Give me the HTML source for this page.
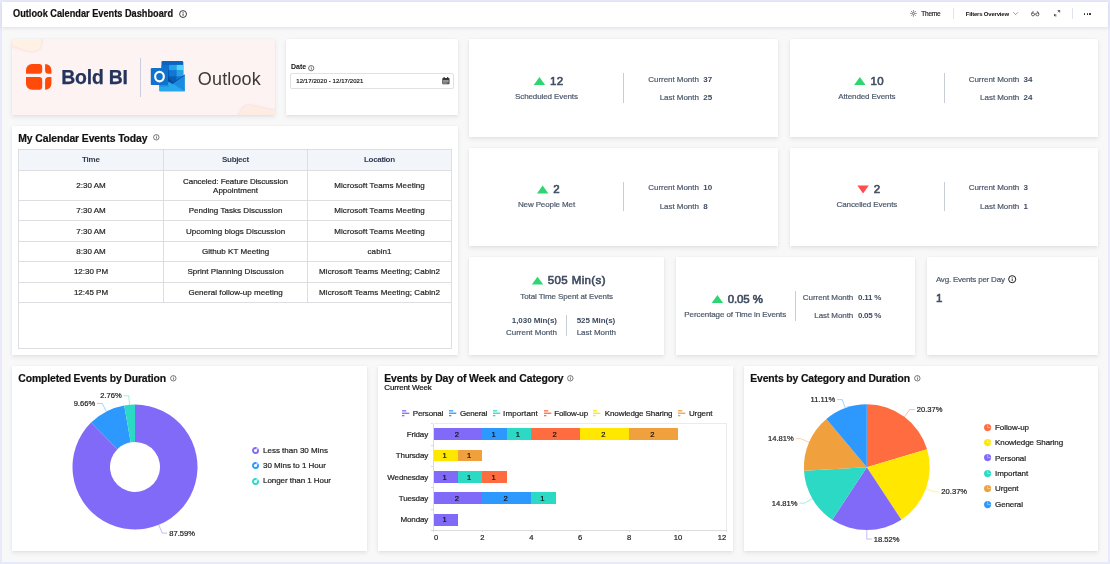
<!DOCTYPE html>
<html><head><meta charset="utf-8"><title>Outlook Calendar Events Dashboard</title>
<style>
html,body{margin:0;padding:0}
body{width:1110px;height:564px;overflow:hidden;background:#e8eafb;font-family:"Liberation Sans",sans-serif;position:relative}
#page{position:absolute;left:2px;top:2px;width:1106px;height:560px;background:#f8f8f9}
.t{position:absolute;white-space:nowrap;line-height:1}
.b{position:absolute}
.card{position:absolute;background:#fff;box-shadow:0 2px 4px rgba(40,50,70,0.10),0 0 2px rgba(40,50,70,0.05)}
svg{position:absolute;overflow:visible}
</style></head><body>
<div id="page"></div>
<div id="root" style="position:absolute;left:0;top:0;width:1110px;height:564px;will-change:transform">
<div class="b" style="left:2px;top:2px;width:1106px;height:25px;background:#fff;box-shadow:0 1px 4px rgba(40,50,70,0.13)"></div>
<div class="t" style="left:12.60px;top:9.00px;font-size:10px;color:#111;font-weight:700;-webkit-text-stroke:0.2px;transform:scaleX(0.9199);transform-origin:left center;">Outlook Calendar Events Dashboard</div>
<svg style="left:179.1px;top:9.5px" width="8.1" height="8.1" viewBox="0 0 8 8"><circle cx="4" cy="4" r="3.4" fill="none" stroke="#1a1a1a" stroke-width="0.85"/><rect x="3.6" y="3.4" width="0.8" height="2.4" fill="#1a1a1a"/><rect x="3.6" y="1.9" width="0.8" height="0.9" fill="#1a1a1a"/></svg>
<div class="card" style="left:12px;top:39px;width:263px;height:76px;background:#fdf3f2;overflow:hidden"></div>
<div class="card" style="left:286px;top:39px;width:172px;height:76px;"></div>
<div class="card" style="left:12px;top:126px;width:446px;height:229px;"></div>
<div class="card" style="left:469px;top:39px;width:309px;height:98px;"></div>
<div class="card" style="left:790px;top:39px;width:308px;height:98px;"></div>
<div class="card" style="left:469px;top:148px;width:309px;height:98px;"></div>
<div class="card" style="left:790px;top:148px;width:308px;height:98px;"></div>
<div class="card" style="left:469px;top:257px;width:195px;height:98px;"></div>
<div class="card" style="left:676px;top:257px;width:239px;height:98px;"></div>
<div class="card" style="left:927px;top:257px;width:171px;height:98px;"></div>
<div class="card" style="left:12px;top:366px;width:355px;height:185px;"></div>
<div class="card" style="left:378px;top:366px;width:355px;height:185px;"></div>
<div class="card" style="left:744px;top:366px;width:354px;height:185px;"></div>
<svg style="left:12px;top:39px" width="263" height="76" viewBox="0 0 263 76"><defs><clipPath id="lc"><rect width="263" height="76"/></clipPath></defs><g clip-path="url(#lc)"><g style="filter:drop-shadow(0 0.5px 1.5px rgba(225,150,150,0.35))"><path d="M-4 -4 H29.2 V2 Q29.6 12 20 12.3 Q14 12.2 -4 5 Z" fill="#fff1e4"/><path d="M226.5 80 Q229 66 237 66 L268 73 V80 Z" fill="#feece2"/></g></g></svg>
<svg style="left:25.7px;top:64.2px" width="25.4" height="25.8" viewBox="0 0 25.4 25.8"><path d="M6 0 H13.2 A3 3 0 0 1 16.2 3 V6.800000000000001 A3 3 0 0 1 13.2 9.8 H0.01 A0.01 0.01 0 0 1 0 9.790000000000001 V6 A6 6 0 0 1 6 0 Z" fill="#ff4a0a"/><path d="M0.01 12.9 H13.2 A3 3 0 0 1 16.2 15.9 V22.8 A3 3 0 0 1 13.2 25.8 H6 A6 6 0 0 1 0 19.8 V12.91 A0.01 0.01 0 0 1 0.01 12.9 Z" fill="#ff4a0a"/><path d="M19.700000000000003 0 H19.4 A6 6 0 0 1 25.4 6 V9.790000000000001 A0.01 0.01 0 0 1 25.389999999999997 9.8 H22.700000000000003 A3.6 3.6 0 0 1 19.1 6.200000000000001 V0.6 A0.6 0.6 0 0 1 19.700000000000003 0 Z" fill="#ff4a0a"/><path d="M22.700000000000003 12.9 H25.389999999999997 A0.01 0.01 0 0 1 25.4 12.91 V19.8 A6 6 0 0 1 19.4 25.8 H19.700000000000003 A0.6 0.6 0 0 1 19.1 25.2 V16.5 A3.6 3.6 0 0 1 22.700000000000003 12.9 Z" fill="#ff4a0a"/></svg>
<div class="t" style="left:61.20px;top:68.00px;font-size:19.4px;color:#25345c;font-weight:700;letter-spacing:-0.182px;-webkit-text-stroke:0.25px #25345c;">Bold BI</div>
<div class="b" style="left:140.00px;top:58.00px;width:1.00px;height:38.50px;background:#c9cde0;"></div>
<svg style="left:150px;top:61px" width="35.4" height="30.5" viewBox="0 0 35.4 30.5">
<rect x="11.5" y="0" width="21.8" height="23" rx="1.3" fill="#0a64c0"/>
<rect x="11.5" y="3.9" width="7.5" height="5.6" fill="#1070cc"/>
<rect x="19" y="3.9" width="7.5" height="5.6" fill="#28a0e8"/>
<rect x="26.5" y="3.9" width="6.8" height="5.6" fill="#4fd4fc"/>
<rect x="11.5" y="9.5" width="7.5" height="6.1" fill="#0a5cb8"/>
<rect x="19" y="9.5" width="7.5" height="6.1" fill="#0f78d4"/>
<rect x="26.5" y="9.5" width="6.8" height="6.1" fill="#28a0e8"/>
<rect x="11.5" y="15.6" width="7.5" height="6.5" fill="#084fa0"/>
<rect x="19" y="15.6" width="7.5" height="7" fill="#0a5cb4"/>
<rect x="26.5" y="15.6" width="6.8" height="6" fill="#0f78d4"/>
<path d="M9.1 15 L18.1 20.3 L34.9 30 V29.2 A1.3 1.3 0 0 1 33.6 30.5 H10.4 A1.3 1.3 0 0 1 9.1 29.2 Z" fill="#28a8ec"/>
<path d="M34.9 13.8 L22 22.7 L34.9 30.4 Z" fill="#1a8ce0"/>
<path d="M18.1 17.4 L24 21.5 L22.3 22.7 L18.1 20.3 Z" fill="#0a4596" opacity="0.75"/>
<path d="M34.9 13.8 L22.3 22.7" stroke="#0a3f94" stroke-width="0.9" opacity="0.85" fill="none"/>
<rect x="9.1" y="24.1" width="9.8" height="1.6" fill="#0a58b0" opacity="0.3"/>
<rect x="18.1" y="8" width="1.2" height="14" fill="#063c80" opacity="0.22"/>
<rect x="0.8" y="7.1" width="17.3" height="17" rx="1.2" fill="#0f72ce"/>
<ellipse cx="9.5" cy="15.6" rx="4.35" ry="4.75" fill="none" stroke="#fff" stroke-width="2.1"/>
</svg>
<div class="t" style="left:197.80px;top:70.00px;font-size:18px;color:#3a3a3a;letter-spacing:0.161px;-webkit-text-stroke:0;">Outlook</div>
<div class="t" style="left:291.00px;top:63.00px;font-size:7px;color:#111;font-weight:700;">Date</div>
<svg style="left:307.6px;top:65px" width="6.4" height="6.4" viewBox="0 0 8 8"><circle cx="4" cy="4" r="3.3" fill="none" stroke="#222" stroke-width="0.8"/><rect x="3.6" y="3.4" width="0.8" height="2.3" fill="#222"/><rect x="3.6" y="2.0" width="0.8" height="0.9" fill="#222"/></svg>
<div class="b" style="left:290.3px;top:73.4px;width:163.4px;height:15.3px;border:1px solid #e1e1e1;border-radius:2px;box-sizing:border-box;background:#fff"></div>
<div class="t" style="left:296.30px;top:78.00px;font-size:6px;color:#222;-webkit-text-stroke:0.2px;letter-spacing:0.073px;">12/17/2020 - 12/17/2021</div>
<svg style="left:442.2px;top:76.5px" width="7.8" height="7.6" viewBox="0 0 7.8 7.6">
<rect x="0.3" y="1" width="7.2" height="6.3" rx="0.8" fill="#333"/>
<rect x="1.6" y="0" width="1.1" height="2" fill="#333"/><rect x="5.1" y="0" width="1.1" height="2" fill="#333"/>
<rect x="1.0" y="2.9" width="5.8" height="3.9" fill="#fff" opacity="0.28"/><rect x="1.2" y="3" width="5.4" height="0.6" fill="#fff" opacity="0.5"/>
<rect x="1.5" y="4.3" width="1" height="0.8" fill="#fff" opacity="0.7"/><rect x="3.4" y="4.3" width="1" height="0.8" fill="#fff" opacity="0.7"/><rect x="5.3" y="4.3" width="1" height="0.8" fill="#fff" opacity="0.7"/>
<rect x="1.5" y="5.7" width="1" height="0.8" fill="#fff" opacity="0.7"/><rect x="3.4" y="5.7" width="1" height="0.8" fill="#fff" opacity="0.7"/>
</svg>
<div class="t" style="left:18.30px;top:134.00px;font-size:10.4px;color:#111;font-weight:700;-webkit-text-stroke:0.2px;letter-spacing:-0.095px;">My Calendar Events Today</div>
<svg style="left:153px;top:134.3px" width="6.6" height="6.6" viewBox="0 0 8 8"><circle cx="4" cy="4" r="3.3" fill="none" stroke="#333" stroke-width="0.8"/><rect x="3.6" y="3.4" width="0.8" height="2.3" fill="#333"/><rect x="3.6" y="2.0" width="0.8" height="0.9" fill="#333"/></svg>
<div class="b" style="left:18.40px;top:149.00px;width:433.20px;height:21.50px;background:#f2f5fa;"></div>
<div class="b" style="left:18.4px;top:149px;width:433.20000000000005px;height:200px;border:0.9px solid #dcdee2;box-sizing:border-box"></div>
<div class="b" style="left:18.40px;top:170.05px;width:433.20px;height:0.90px;background:#dcdee2;"></div>
<div class="b" style="left:18.40px;top:199.95px;width:433.20px;height:0.90px;background:#dcdee2;"></div>
<div class="b" style="left:18.40px;top:220.35px;width:433.20px;height:0.90px;background:#dcdee2;"></div>
<div class="b" style="left:18.40px;top:240.75px;width:433.20px;height:0.90px;background:#dcdee2;"></div>
<div class="b" style="left:18.40px;top:261.15px;width:433.20px;height:0.90px;background:#dcdee2;"></div>
<div class="b" style="left:18.40px;top:281.55px;width:433.20px;height:0.90px;background:#dcdee2;"></div>
<div class="b" style="left:18.40px;top:301.95px;width:433.20px;height:0.90px;background:#dcdee2;"></div>
<div class="b" style="left:163.15px;top:149.00px;width:0.90px;height:153.40px;background:#dcdee2;"></div>
<div class="b" style="left:307.05px;top:149.00px;width:0.90px;height:153.40px;background:#dcdee2;"></div>
<div class="t" style="left:82.10px;top:156.00px;font-size:8px;color:#2f3b52;font-weight:700;letter-spacing:-0.242px;">Time</div>
<div class="t" style="left:222.05px;top:156.00px;font-size:8px;color:#2f3b52;font-weight:700;letter-spacing:-0.316px;">Subject</div>
<div class="t" style="left:364.05px;top:156.00px;font-size:8px;color:#2f3b52;font-weight:700;letter-spacing:-0.333px;">Location</div>
<div class="t" style="left:76.32px;top:182.00px;font-size:8px;color:#1f1f1f;-webkit-text-stroke:0.2px;">2:30 AM</div>
<div class="t" style="left:334.27px;top:182.00px;font-size:8px;color:#1f1f1f;-webkit-text-stroke:0.2px;letter-spacing:0.081px;">Microsoft Teams Meeting</div>
<div class="t" style="left:76.32px;top:207.00px;font-size:8px;color:#1f1f1f;-webkit-text-stroke:0.2px;">7:30 AM</div>
<div class="t" style="left:188.69px;top:207.00px;font-size:8px;color:#1f1f1f;-webkit-text-stroke:0.2px;letter-spacing:0.040px;">Pending Tasks Discussion</div>
<div class="t" style="left:334.27px;top:207.00px;font-size:8px;color:#1f1f1f;-webkit-text-stroke:0.2px;letter-spacing:0.081px;">Microsoft Teams Meeting</div>
<div class="t" style="left:76.32px;top:228.00px;font-size:8px;color:#1f1f1f;-webkit-text-stroke:0.2px;">7:30 AM</div>
<div class="t" style="left:185.92px;top:228.00px;font-size:8px;color:#1f1f1f;-webkit-text-stroke:0.2px;letter-spacing:0.041px;">Upcoming blogs Discussion</div>
<div class="t" style="left:334.27px;top:228.00px;font-size:8px;color:#1f1f1f;-webkit-text-stroke:0.2px;letter-spacing:0.081px;">Microsoft Teams Meeting</div>
<div class="t" style="left:76.32px;top:248.00px;font-size:8px;color:#1f1f1f;-webkit-text-stroke:0.2px;">8:30 AM</div>
<div class="t" style="left:201.94px;top:248.00px;font-size:8px;color:#1f1f1f;-webkit-text-stroke:0.2px;letter-spacing:0.042px;">Github KT Meeting</div>
<div class="t" style="left:367.53px;top:248.00px;font-size:8px;color:#1f1f1f;-webkit-text-stroke:0.2px;letter-spacing:0.094px;">cabin1</div>
<div class="t" style="left:73.88px;top:268.00px;font-size:8px;color:#1f1f1f;-webkit-text-stroke:0.2px;">12:30 PM</div>
<div class="t" style="left:187.49px;top:268.00px;font-size:8px;color:#1f1f1f;-webkit-text-stroke:0.2px;letter-spacing:0.038px;">Sprint Planning Discussion</div>
<div class="t" style="left:319.08px;top:268.00px;font-size:8px;color:#1f1f1f;-webkit-text-stroke:0.2px;letter-spacing:0.079px;">Microsoft Teams Meeting; Cabin2</div>
<div class="t" style="left:73.88px;top:289.00px;font-size:8px;color:#1f1f1f;-webkit-text-stroke:0.2px;">12:45 PM</div>
<div class="t" style="left:188.39px;top:289.00px;font-size:8px;color:#1f1f1f;-webkit-text-stroke:0.2px;letter-spacing:0.039px;">General follow-up meeting</div>
<div class="t" style="left:319.08px;top:289.00px;font-size:8px;color:#1f1f1f;-webkit-text-stroke:0.2px;letter-spacing:0.079px;">Microsoft Teams Meeting; Cabin2</div>
<div class="t" style="left:183.05px;top:178.00px;font-size:8px;color:#1f1f1f;-webkit-text-stroke:0.2px;letter-spacing:-0.064px;">Canceled: Feature Discussion</div>
<div class="t" style="left:213.09px;top:187.00px;font-size:8px;color:#1f1f1f;-webkit-text-stroke:0.2px;">Appointment</div>
<svg style="left:0;top:0" width="1" height="1"><path d="M533.7540234375 84.9 L539.4540234374999 76.9 L545.1540234375 84.9 Z" fill="#2ed573"/></svg>
<div class="t" style="left:550.05px;top:76.00px;font-size:11.5px;color:#3f4b5f;letter-spacing:0.400px;-webkit-text-stroke:0.6px #3f4b5f;">12</div>
<div class="t" style="left:515.06px;top:93.00px;font-size:8px;color:#4d596b;-webkit-text-stroke:0.2px;letter-spacing:-0.107px;">Scheduled Events</div>
<div class="b" style="left:623.20px;top:73.00px;width:0.80px;height:29.80px;background:#c8ccd4;"></div>
<div class="t" style="left:648.28px;top:76.00px;font-size:8px;color:#4d596b;-webkit-text-stroke:0.2px;letter-spacing:-0.043px;">Current Month</div>
<div class="t" style="left:659.72px;top:94.00px;font-size:8px;color:#4d596b;-webkit-text-stroke:0.2px;letter-spacing:-0.044px;">Last Month</div>
<div class="t" style="left:703.20px;top:76.00px;font-size:8px;color:#3f4b5f;font-weight:700;">37</div>
<div class="t" style="left:703.20px;top:94.00px;font-size:8px;color:#3f4b5f;font-weight:700;">25</div>
<svg style="left:0;top:0" width="1" height="1"><path d="M854.1540234375 84.9 L859.8540234375 76.9 L865.5540234375 84.9 Z" fill="#2ed573"/></svg>
<div class="t" style="left:870.45px;top:76.00px;font-size:11.5px;color:#3f4b5f;letter-spacing:0.400px;-webkit-text-stroke:0.6px #3f4b5f;">10</div>
<div class="t" style="left:838.28px;top:93.00px;font-size:8px;color:#4d596b;-webkit-text-stroke:0.2px;letter-spacing:-0.105px;">Attended Events</div>
<div class="b" style="left:943.60px;top:73.00px;width:0.80px;height:29.80px;background:#c8ccd4;"></div>
<div class="t" style="left:968.68px;top:76.00px;font-size:8px;color:#4d596b;-webkit-text-stroke:0.2px;letter-spacing:-0.043px;">Current Month</div>
<div class="t" style="left:980.12px;top:94.00px;font-size:8px;color:#4d596b;-webkit-text-stroke:0.2px;letter-spacing:-0.044px;">Last Month</div>
<div class="t" style="left:1023.60px;top:76.00px;font-size:8px;color:#3f4b5f;font-weight:700;">34</div>
<div class="t" style="left:1023.60px;top:94.00px;font-size:8px;color:#3f4b5f;font-weight:700;">24</div>
<svg style="left:0;top:0" width="1" height="1"><path d="M536.95201171875 193.4 L542.6520117187499 185.4 L548.35201171875 193.4 Z" fill="#2ed573"/></svg>
<div class="t" style="left:553.25px;top:184.00px;font-size:11.5px;color:#3f4b5f;-webkit-text-stroke:0.6px #3f4b5f;">2</div>
<div class="t" style="left:517.89px;top:201.00px;font-size:8px;color:#4d596b;-webkit-text-stroke:0.2px;letter-spacing:-0.113px;">New People Met</div>
<div class="b" style="left:623.20px;top:181.50px;width:0.80px;height:29.80px;background:#c8ccd4;"></div>
<div class="t" style="left:648.28px;top:184.00px;font-size:8px;color:#4d596b;-webkit-text-stroke:0.2px;letter-spacing:-0.043px;">Current Month</div>
<div class="t" style="left:659.72px;top:203.00px;font-size:8px;color:#4d596b;-webkit-text-stroke:0.2px;letter-spacing:-0.044px;">Last Month</div>
<div class="t" style="left:703.20px;top:184.00px;font-size:8px;color:#3f4b5f;font-weight:700;">10</div>
<div class="t" style="left:703.20px;top:203.00px;font-size:8px;color:#3f4b5f;font-weight:700;">8</div>
<svg style="left:0;top:0" width="1" height="1"><path d="M857.35201171875 185.4 L863.05201171875 193.4 L868.7520117187499 185.4 Z" fill="#ff4d4f"/></svg>
<div class="t" style="left:873.65px;top:184.00px;font-size:11.5px;color:#3f4b5f;-webkit-text-stroke:0.6px #3f4b5f;">2</div>
<div class="t" style="left:836.55px;top:201.00px;font-size:8px;color:#4d596b;-webkit-text-stroke:0.2px;letter-spacing:-0.104px;">Cancelled Events</div>
<div class="b" style="left:943.60px;top:181.50px;width:0.80px;height:29.80px;background:#c8ccd4;"></div>
<div class="t" style="left:968.68px;top:184.00px;font-size:8px;color:#4d596b;-webkit-text-stroke:0.2px;letter-spacing:-0.043px;">Current Month</div>
<div class="t" style="left:980.12px;top:203.00px;font-size:8px;color:#4d596b;-webkit-text-stroke:0.2px;letter-spacing:-0.044px;">Last Month</div>
<div class="t" style="left:1023.60px;top:184.00px;font-size:8px;color:#3f4b5f;font-weight:700;">3</div>
<div class="t" style="left:1023.60px;top:203.00px;font-size:8px;color:#3f4b5f;font-weight:700;">1</div>
<svg style="left:0;top:0" width="1" height="1"><path d="M531.8 284.6 L537.5 276.7 L543.1999999999999 284.6 Z" fill="#2ed573"/></svg>
<div class="t" style="left:547.80px;top:275.00px;font-size:11.5px;color:#3f4b5f;letter-spacing:0.375px;-webkit-text-stroke:0.6px #3f4b5f;">505 Min(s)</div>
<div class="t" style="left:520.31px;top:293.00px;font-size:8px;color:#4d596b;-webkit-text-stroke:0.2px;letter-spacing:-0.095px;">Total Time Spent at Events</div>
<div class="t" style="left:511.80px;top:317.00px;font-size:8px;color:#3f4b5f;font-weight:700;letter-spacing:-0.054px;">1,030 Min(s)</div>
<div class="t" style="left:506.02px;top:329.00px;font-size:8px;color:#4d596b;-webkit-text-stroke:0.2px;letter-spacing:-0.021px;">Current Month</div>
<div class="b" style="left:566.20px;top:315.20px;width:0.80px;height:21.20px;background:#c8ccd4;"></div>
<div class="t" style="left:576.70px;top:317.00px;font-size:8px;color:#3f4b5f;font-weight:700;letter-spacing:-0.069px;">525 Min(s)</div>
<div class="t" style="left:576.70px;top:329.00px;font-size:8px;color:#4d596b;-webkit-text-stroke:0.2px;letter-spacing:-0.022px;">Last Month</div>
<svg style="left:0;top:0" width="1" height="1"><path d="M711.7 303.1 L717.4000000000001 295 L723.1 303.1 Z" fill="#2ed573"/></svg>
<div class="t" style="left:727.70px;top:294.00px;font-size:11.5px;color:#3f4b5f;letter-spacing:-0.121px;-webkit-text-stroke:0.6px #3f4b5f;">0.05 %</div>
<div class="t" style="left:684.36px;top:311.00px;font-size:8px;color:#4d596b;-webkit-text-stroke:0.2px;letter-spacing:-0.097px;">Percentage of Time in Events</div>
<div class="b" style="left:795.00px;top:291.20px;width:0.80px;height:29.60px;background:#c8ccd4;"></div>
<div class="t" style="left:802.83px;top:294.00px;font-size:8px;color:#4d596b;-webkit-text-stroke:0.2px;letter-spacing:-0.055px;">Current Month</div>
<div class="t" style="left:814.24px;top:312.00px;font-size:8px;color:#4d596b;-webkit-text-stroke:0.2px;letter-spacing:-0.057px;">Last Month</div>
<div class="t" style="left:858.10px;top:294.00px;font-size:8px;color:#3f4b5f;font-weight:700;letter-spacing:-0.233px;">0.11 %</div>
<div class="t" style="left:858.10px;top:312.00px;font-size:8px;color:#3f4b5f;font-weight:700;letter-spacing:-0.321px;">0.05 %</div>
<div class="t" style="left:935.90px;top:276.00px;font-size:8px;color:#4d596b;-webkit-text-stroke:0.2px;letter-spacing:-0.210px;">Avg. Events per Day</div>
<svg style="left:1007.6px;top:274.8px" width="8.4" height="8.4" viewBox="0 0 8.4 8.4"><circle cx="4.2" cy="4.2" r="3.55" fill="none" stroke="#111" stroke-width="0.95"/><rect x="3.8" y="3.7" width="0.8" height="2.4" fill="#111"/><rect x="3.8" y="2.3" width="0.8" height="0.9" fill="#111"/></svg>
<div class="t" style="left:936.00px;top:293.00px;font-size:11.5px;color:#3f4b5f;-webkit-text-stroke:0.6px #3f4b5f;">1</div>
<div class="t" style="left:18.30px;top:374.00px;font-size:10.4px;color:#111;font-weight:700;-webkit-text-stroke:0.2px;letter-spacing:-0.126px;">Completed Events by Duration</div>
<svg style="left:170px;top:374.6px" width="6.6" height="6.6" viewBox="0 0 8 8"><circle cx="4" cy="4" r="3.3" fill="none" stroke="#333" stroke-width="0.8"/><rect x="3.6" y="3.4" width="0.8" height="2.3" fill="#333"/><rect x="3.6" y="2.0" width="0.8" height="0.9" fill="#333"/></svg>
<div class="t" style="left:384.30px;top:374.00px;font-size:10.4px;color:#111;font-weight:700;-webkit-text-stroke:0.2px;letter-spacing:-0.107px;">Events by Day of Week and Category</div>
<svg style="left:567px;top:374.6px" width="6.6" height="6.6" viewBox="0 0 8 8"><circle cx="4" cy="4" r="3.3" fill="none" stroke="#333" stroke-width="0.8"/><rect x="3.6" y="3.4" width="0.8" height="2.3" fill="#333"/><rect x="3.6" y="2.0" width="0.8" height="0.9" fill="#333"/></svg>
<div class="t" style="left:384.30px;top:384.00px;font-size:8px;color:#111;-webkit-text-stroke:0.2px;letter-spacing:-0.155px;">Current Week</div>
<div class="t" style="left:750.30px;top:374.00px;font-size:10.4px;color:#111;font-weight:700;-webkit-text-stroke:0.2px;letter-spacing:-0.137px;">Events by Category and Duration</div>
<svg style="left:914px;top:374.6px" width="6.6" height="6.6" viewBox="0 0 8 8"><circle cx="4" cy="4" r="3.3" fill="none" stroke="#333" stroke-width="0.8"/><rect x="3.6" y="3.4" width="0.8" height="2.3" fill="#333"/><rect x="3.6" y="2.0" width="0.8" height="0.9" fill="#333"/></svg>
<div class="t" style="left:169.19px;top:530.00px;font-size:7.6px;color:#222;-webkit-text-stroke:0.2px;">87.59%</div>
<div class="t" style="left:73.63px;top:400.00px;font-size:7.6px;color:#222;-webkit-text-stroke:0.2px;">9.66%</div>
<div class="t" style="left:100.26px;top:392.00px;font-size:7.6px;color:#222;-webkit-text-stroke:0.2px;">2.76%</div>
<svg style="left:0;top:0" width="1110" height="564"><path d="M135.00 404.50 A62.5 62.5 0 1 1 91.03 422.58 L117.41 449.23 A25 25 0 1 0 135.00 442.00 Z" fill="#826af9"/><path d="M158.77 524.80 L162.19 533.13 L167.19 533.13" fill="none" stroke="#826af9" stroke-width="0.6" opacity="0.75"/><path d="M91.03 422.58 A62.5 62.5 0 0 1 124.22 405.44 L130.69 442.37 A25 25 0 0 0 117.41 449.23 Z" fill="#2d99ff"/><path d="M106.31 411.47 L102.18 403.48 L97.18 403.48" fill="none" stroke="#2d99ff" stroke-width="0.6" opacity="0.75"/><path d="M124.22 405.44 A62.5 62.5 0 0 1 135.00 404.50 L135.00 442.00 A25 25 0 0 0 130.69 442.37 Z" fill="#2cd9c5"/><path d="M129.59 404.73 L128.81 395.77 L123.81 395.77" fill="none" stroke="#2cd9c5" stroke-width="0.6" opacity="0.75"/></svg>
<svg style="left:252.0px;top:446.6px" width="7" height="7" viewBox="0 0 7 7"><circle cx="3.5" cy="3.5" r="2.55" fill="none" stroke="#826af9" stroke-width="1.9"/><path d="M3.5 3.5 L4.9 -0.5 L7.5 1.8 Z" fill="#fff" opacity="0.55"/></svg>
<div class="t" style="left:263.00px;top:447.00px;font-size:8px;color:#222;-webkit-text-stroke:0.2px;letter-spacing:-0.002px;">Less than 30 Mins</div>
<svg style="left:252.0px;top:462.2px" width="7" height="7" viewBox="0 0 7 7"><circle cx="3.5" cy="3.5" r="2.55" fill="none" stroke="#2d99ff" stroke-width="1.9"/><path d="M3.5 3.5 L4.9 -0.5 L7.5 1.8 Z" fill="#fff" opacity="0.55"/></svg>
<div class="t" style="left:263.00px;top:462.00px;font-size:8px;color:#222;-webkit-text-stroke:0.2px;letter-spacing:-0.021px;">30 Mins to 1 Hour</div>
<svg style="left:252.0px;top:477.5px" width="7" height="7" viewBox="0 0 7 7"><circle cx="3.5" cy="3.5" r="2.55" fill="none" stroke="#2cd9c5" stroke-width="1.9"/><path d="M3.5 3.5 L4.9 -0.5 L7.5 1.8 Z" fill="#fff" opacity="0.55"/></svg>
<div class="t" style="left:263.00px;top:477.00px;font-size:8px;color:#222;-webkit-text-stroke:0.2px;letter-spacing:-0.055px;">Longer than 1 Hour</div>
<div class="t" style="left:916.74px;top:406.00px;font-size:7.6px;color:#222;-webkit-text-stroke:0.2px;">20.37%</div>
<div class="t" style="left:941.36px;top:488.00px;font-size:7.6px;color:#222;-webkit-text-stroke:0.2px;">20.37%</div>
<div class="t" style="left:873.78px;top:536.00px;font-size:7.6px;color:#222;-webkit-text-stroke:0.2px;">18.52%</div>
<div class="t" style="left:771.75px;top:500.00px;font-size:7.6px;color:#222;-webkit-text-stroke:0.2px;">14.81%</div>
<div class="t" style="left:768.01px;top:435.00px;font-size:7.6px;color:#222;-webkit-text-stroke:0.2px;">14.81%</div>
<div class="t" style="left:810.56px;top:396.00px;font-size:7.6px;color:#222;-webkit-text-stroke:0.2px;">11.11%</div>
<svg style="left:0;top:0" width="1110" height="564"><path d="M866.8 467.2 L866.80 404.30 A62.9 62.9 0 0 1 927.06 449.17 Z" fill="#ff6c40"/><path d="M904.36 416.75 L909.74 409.53 L914.74 409.53" fill="none" stroke="#ff6c40" stroke-width="0.6" opacity="0.75"/><path d="M866.8 467.2 L927.06 449.17 A62.9 62.9 0 0 1 901.35 519.76 Z" fill="#ffe700"/><path d="M925.90 488.72 L934.36 491.80 L939.36 491.80" fill="none" stroke="#ffe700" stroke-width="0.6" opacity="0.75"/><path d="M866.8 467.2 L901.35 519.76 A62.9 62.9 0 0 1 832.21 519.74 Z" fill="#826af9"/><path d="M866.78 530.10 L866.78 539.10 L871.78 539.10" fill="none" stroke="#826af9" stroke-width="0.6" opacity="0.75"/><path d="M866.8 467.2 L832.21 519.74 A62.9 62.9 0 0 1 804.01 470.84 Z" fill="#2cd9c5"/><path d="M812.32 498.63 L804.52 503.13 L799.52 503.13" fill="none" stroke="#2cd9c5" stroke-width="0.6" opacity="0.75"/><path d="M866.8 467.2 L804.01 470.84 A62.9 62.9 0 0 1 826.37 419.02 Z" fill="#f0a03c"/><path d="M809.05 442.28 L800.78 438.71 L795.78 438.71" fill="none" stroke="#f0a03c" stroke-width="0.6" opacity="0.75"/><path d="M866.8 467.2 L826.37 419.02 A62.9 62.9 0 0 1 866.80 404.30 Z" fill="#2d99ff"/><path d="M845.29 408.09 L842.21 399.64 L837.21 399.64" fill="none" stroke="#2d99ff" stroke-width="0.6" opacity="0.75"/></svg>
<svg style="left:983.8px;top:423.5px" width="7.2" height="7.2" viewBox="0 0 7.2 7.2"><circle cx="3.6" cy="3.6" r="3.55" fill="#ff6c40"/><path d="M3.6 0.3 V3.6 H6.9" fill="none" stroke="#fff" stroke-width="0.55" opacity="0.75"/></svg>
<div class="t" style="left:995.00px;top:424.00px;font-size:8px;color:#222;-webkit-text-stroke:0.2px;letter-spacing:-0.078px;">Follow-up</div>
<svg style="left:983.8px;top:438.92px" width="7.2" height="7.2" viewBox="0 0 7.2 7.2"><circle cx="3.6" cy="3.6" r="3.55" fill="#ffe700"/><path d="M3.6 0.3 V3.6 H6.9" fill="none" stroke="#fff" stroke-width="0.55" opacity="0.75"/></svg>
<div class="t" style="left:995.00px;top:439.00px;font-size:8px;color:#222;-webkit-text-stroke:0.2px;letter-spacing:-0.078px;">Knowledge Sharing</div>
<svg style="left:983.8px;top:454.34px" width="7.2" height="7.2" viewBox="0 0 7.2 7.2"><circle cx="3.6" cy="3.6" r="3.55" fill="#826af9"/><path d="M3.6 0.3 V3.6 H6.9" fill="none" stroke="#fff" stroke-width="0.55" opacity="0.75"/></svg>
<div class="t" style="left:995.00px;top:455.00px;font-size:8px;color:#222;-webkit-text-stroke:0.2px;letter-spacing:-0.081px;">Personal</div>
<svg style="left:983.8px;top:469.76px" width="7.2" height="7.2" viewBox="0 0 7.2 7.2"><circle cx="3.6" cy="3.6" r="3.55" fill="#2cd9c5"/><path d="M3.6 0.3 V3.6 H6.9" fill="none" stroke="#fff" stroke-width="0.55" opacity="0.75"/></svg>
<div class="t" style="left:995.00px;top:470.00px;font-size:8px;color:#222;-webkit-text-stroke:0.2px;letter-spacing:-0.076px;">Important</div>
<svg style="left:983.8px;top:485.18px" width="7.2" height="7.2" viewBox="0 0 7.2 7.2"><circle cx="3.6" cy="3.6" r="3.55" fill="#f0a03c"/><path d="M3.6 0.3 V3.6 H6.9" fill="none" stroke="#fff" stroke-width="0.55" opacity="0.75"/></svg>
<div class="t" style="left:995.00px;top:485.00px;font-size:8px;color:#222;-webkit-text-stroke:0.2px;letter-spacing:-0.086px;">Urgent</div>
<svg style="left:983.8px;top:500.6px" width="7.2" height="7.2" viewBox="0 0 7.2 7.2"><circle cx="3.6" cy="3.6" r="3.55" fill="#2d99ff"/><path d="M3.6 0.3 V3.6 H6.9" fill="none" stroke="#fff" stroke-width="0.55" opacity="0.75"/></svg>
<div class="t" style="left:995.00px;top:501.00px;font-size:8px;color:#222;-webkit-text-stroke:0.2px;letter-spacing:-0.085px;">General</div>
<div class="b" style="left:433.50px;top:423.10px;width:293.00px;height:0.80px;background:#ebebeb;"></div>
<div class="b" style="left:726.10px;top:423.50px;width:0.80px;height:106.80px;background:#ebebeb;"></div>
<div class="b" style="left:433.10px;top:423.50px;width:0.80px;height:106.80px;background:#dcdcdc;"></div>
<div class="b" style="left:433.50px;top:529.90px;width:293.00px;height:0.80px;background:#dcdcdc;"></div>
<div class="b" style="left:430.90px;top:423.15px;width:2.60px;height:0.70px;background:#dcdcdc;"></div>
<div class="b" style="left:430.90px;top:444.51px;width:2.60px;height:0.70px;background:#dcdcdc;"></div>
<div class="b" style="left:430.90px;top:465.87px;width:2.60px;height:0.70px;background:#dcdcdc;"></div>
<div class="b" style="left:430.90px;top:487.23px;width:2.60px;height:0.70px;background:#dcdcdc;"></div>
<div class="b" style="left:430.90px;top:508.59px;width:2.60px;height:0.70px;background:#dcdcdc;"></div>
<div class="b" style="left:430.90px;top:529.95px;width:2.60px;height:0.70px;background:#dcdcdc;"></div>
<div class="b" style="left:433.15px;top:530.30px;width:0.70px;height:1.60px;background:#dcdcdc;"></div>
<div class="b" style="left:482.03px;top:530.30px;width:0.70px;height:1.60px;background:#dcdcdc;"></div>
<div class="b" style="left:530.91px;top:530.30px;width:0.70px;height:1.60px;background:#dcdcdc;"></div>
<div class="b" style="left:579.79px;top:530.30px;width:0.70px;height:1.60px;background:#dcdcdc;"></div>
<div class="b" style="left:628.67px;top:530.30px;width:0.70px;height:1.60px;background:#dcdcdc;"></div>
<div class="b" style="left:677.55px;top:530.30px;width:0.70px;height:1.60px;background:#dcdcdc;"></div>
<div class="b" style="left:726.43px;top:530.30px;width:0.70px;height:1.60px;background:#dcdcdc;"></div>
<div class="t" style="left:406.64px;top:431.00px;font-size:8px;color:#222;-webkit-text-stroke:0.2px;letter-spacing:-0.133px;">Friday</div>
<div class="b" style="left:433.50px;top:428.28px;width:48.88px;height:11.80px;background:#826af9;"></div>
<div class="t" style="left:454.73px;top:431.00px;font-size:7.6px;color:#111;-webkit-text-stroke:0.2px;">2</div>
<div class="b" style="left:482.38px;top:428.28px;width:24.44px;height:11.80px;background:#2d99ff;"></div>
<div class="t" style="left:491.39px;top:431.00px;font-size:7.6px;color:#111;-webkit-text-stroke:0.2px;">1</div>
<div class="b" style="left:506.82px;top:428.28px;width:24.44px;height:11.80px;background:#2cd9c5;"></div>
<div class="t" style="left:515.83px;top:431.00px;font-size:7.6px;color:#111;-webkit-text-stroke:0.2px;">1</div>
<div class="b" style="left:531.26px;top:428.28px;width:48.88px;height:11.80px;background:#ff6c40;"></div>
<div class="t" style="left:552.49px;top:431.00px;font-size:7.6px;color:#111;-webkit-text-stroke:0.2px;">2</div>
<div class="b" style="left:580.14px;top:428.28px;width:48.88px;height:11.80px;background:#ffe700;"></div>
<div class="t" style="left:601.37px;top:431.00px;font-size:7.6px;color:#111;-webkit-text-stroke:0.2px;">2</div>
<div class="b" style="left:629.02px;top:428.28px;width:48.88px;height:11.80px;background:#f0a03c;"></div>
<div class="t" style="left:650.25px;top:431.00px;font-size:7.6px;color:#111;-webkit-text-stroke:0.2px;">2</div>
<div class="t" style="left:395.85px;top:452.00px;font-size:8px;color:#222;-webkit-text-stroke:0.2px;letter-spacing:-0.143px;">Thursday</div>
<div class="b" style="left:433.50px;top:449.64px;width:24.44px;height:11.80px;background:#ffe700;"></div>
<div class="t" style="left:442.51px;top:452.00px;font-size:7.6px;color:#111;-webkit-text-stroke:0.2px;">1</div>
<div class="b" style="left:457.94px;top:449.64px;width:24.44px;height:11.80px;background:#f0a03c;"></div>
<div class="t" style="left:466.95px;top:452.00px;font-size:7.6px;color:#111;-webkit-text-stroke:0.2px;">1</div>
<div class="t" style="left:387.36px;top:474.00px;font-size:8px;color:#222;-webkit-text-stroke:0.2px;letter-spacing:-0.158px;">Wednesday</div>
<div class="b" style="left:433.50px;top:471.00px;width:24.44px;height:11.80px;background:#826af9;"></div>
<div class="t" style="left:442.51px;top:474.00px;font-size:7.6px;color:#111;-webkit-text-stroke:0.2px;">1</div>
<div class="b" style="left:457.94px;top:471.00px;width:24.44px;height:11.80px;background:#2cd9c5;"></div>
<div class="t" style="left:466.95px;top:474.00px;font-size:7.6px;color:#111;-webkit-text-stroke:0.2px;">1</div>
<div class="b" style="left:482.38px;top:471.00px;width:24.44px;height:11.80px;background:#ff6c40;"></div>
<div class="t" style="left:491.39px;top:474.00px;font-size:7.6px;color:#111;-webkit-text-stroke:0.2px;">1</div>
<div class="t" style="left:398.72px;top:495.00px;font-size:8px;color:#222;-webkit-text-stroke:0.2px;letter-spacing:-0.152px;">Tuesday</div>
<div class="b" style="left:433.50px;top:492.36px;width:48.88px;height:11.80px;background:#826af9;"></div>
<div class="t" style="left:454.73px;top:495.00px;font-size:7.6px;color:#111;-webkit-text-stroke:0.2px;">2</div>
<div class="b" style="left:482.38px;top:492.36px;width:48.88px;height:11.80px;background:#2d99ff;"></div>
<div class="t" style="left:503.61px;top:495.00px;font-size:7.6px;color:#111;-webkit-text-stroke:0.2px;">2</div>
<div class="b" style="left:531.26px;top:492.36px;width:24.44px;height:11.80px;background:#2cd9c5;"></div>
<div class="t" style="left:540.27px;top:495.00px;font-size:7.6px;color:#111;-webkit-text-stroke:0.2px;">1</div>
<div class="t" style="left:400.59px;top:516.00px;font-size:8px;color:#222;-webkit-text-stroke:0.2px;letter-spacing:-0.171px;">Monday</div>
<div class="b" style="left:433.50px;top:513.72px;width:24.44px;height:11.80px;background:#826af9;"></div>
<div class="t" style="left:442.51px;top:516.00px;font-size:7.6px;color:#111;-webkit-text-stroke:0.2px;">1</div>
<div class="t" style="left:434.00px;top:534.00px;font-size:7.6px;color:#222;-webkit-text-stroke:0.2px;">0</div>
<div class="t" style="left:480.27px;top:534.00px;font-size:7.6px;color:#222;-webkit-text-stroke:0.2px;">2</div>
<div class="t" style="left:529.15px;top:534.00px;font-size:7.6px;color:#222;-webkit-text-stroke:0.2px;">4</div>
<div class="t" style="left:578.03px;top:534.00px;font-size:7.6px;color:#222;-webkit-text-stroke:0.2px;">6</div>
<div class="t" style="left:626.91px;top:534.00px;font-size:7.6px;color:#222;-webkit-text-stroke:0.2px;">8</div>
<div class="t" style="left:673.67px;top:534.00px;font-size:7.6px;color:#222;-webkit-text-stroke:0.2px;">10</div>
<div class="t" style="left:717.85px;top:534.00px;font-size:7.6px;color:#222;-webkit-text-stroke:0.2px;">12</div>
<svg style="left:401.8px;top:409.9px" width="7.3" height="6.4" viewBox="0 0 7.3 6.4"><rect x="0" y="0.2" width="4.2" height="1.3" fill="#826af9"/><rect x="0" y="2.6" width="7.3" height="1.3" fill="#826af9"/><rect x="0" y="5" width="2.4" height="1.3" fill="#826af9"/></svg>
<div class="t" style="left:412.80px;top:410.00px;font-size:8px;color:#222;-webkit-text-stroke:0.2px;letter-spacing:-0.154px;">Personal</div>
<svg style="left:449.2px;top:409.9px" width="7.3" height="6.4" viewBox="0 0 7.3 6.4"><rect x="0" y="0.2" width="4.2" height="1.3" fill="#2d99ff"/><rect x="0" y="2.6" width="7.3" height="1.3" fill="#2d99ff"/><rect x="0" y="5" width="2.4" height="1.3" fill="#2d99ff"/></svg>
<div class="t" style="left:460.00px;top:410.00px;font-size:8px;color:#222;-webkit-text-stroke:0.2px;letter-spacing:-0.210px;">General</div>
<svg style="left:492.6px;top:409.9px" width="7.3" height="6.4" viewBox="0 0 7.3 6.4"><rect x="0" y="0.2" width="4.2" height="1.3" fill="#2cd9c5"/><rect x="0" y="2.6" width="7.3" height="1.3" fill="#2cd9c5"/><rect x="0" y="5" width="2.4" height="1.3" fill="#2cd9c5"/></svg>
<div class="t" style="left:503.10px;top:410.00px;font-size:8px;color:#222;-webkit-text-stroke:0.2px;letter-spacing:0.113px;">Important</div>
<svg style="left:543.6px;top:409.9px" width="7.3" height="6.4" viewBox="0 0 7.3 6.4"><rect x="0" y="0.2" width="4.2" height="1.3" fill="#ff6c40"/><rect x="0" y="2.6" width="7.3" height="1.3" fill="#ff6c40"/><rect x="0" y="5" width="2.4" height="1.3" fill="#ff6c40"/></svg>
<div class="t" style="left:554.20px;top:410.00px;font-size:8px;color:#222;-webkit-text-stroke:0.2px;letter-spacing:-0.085px;">Follow-up</div>
<svg style="left:593.3px;top:409.9px" width="7.3" height="6.4" viewBox="0 0 7.3 6.4"><rect x="0" y="0.2" width="4.2" height="1.3" fill="#ffe700"/><rect x="0" y="2.6" width="7.3" height="1.3" fill="#ffe700"/><rect x="0" y="5" width="2.4" height="1.3" fill="#ffe700"/></svg>
<div class="t" style="left:604.80px;top:410.00px;font-size:8px;color:#222;-webkit-text-stroke:0.2px;letter-spacing:-0.105px;">Knowledge Sharing</div>
<svg style="left:678px;top:409.9px" width="7.3" height="6.4" viewBox="0 0 7.3 6.4"><rect x="0" y="0.2" width="4.2" height="1.3" fill="#f0a03c"/><rect x="0" y="2.6" width="7.3" height="1.3" fill="#f0a03c"/><rect x="0" y="5" width="2.4" height="1.3" fill="#f0a03c"/></svg>
<div class="t" style="left:688.90px;top:410.00px;font-size:8px;color:#222;-webkit-text-stroke:0.2px;letter-spacing:-0.082px;">Urgent</div>
<svg style="left:910px;top:9.9px" width="6.8" height="6.8" viewBox="0 0 6.8 6.8"><g stroke="#444" stroke-width="0.7" fill="none"><circle cx="3.4" cy="3.4" r="1.05"/><line x1="3.40" y1="1.65" x2="3.40" y2="0.20"/><line x1="4.64" y1="2.16" x2="5.66" y2="1.14"/><line x1="5.15" y1="3.40" x2="6.60" y2="3.40"/><line x1="4.64" y1="4.64" x2="5.66" y2="5.66"/><line x1="3.40" y1="5.15" x2="3.40" y2="6.60"/><line x1="2.16" y1="4.64" x2="1.14" y2="5.66"/><line x1="1.65" y1="3.40" x2="0.20" y2="3.40"/><line x1="2.16" y1="2.16" x2="1.14" y2="1.14"/></g></svg>
<div class="t" style="left:921.20px;top:11.00px;font-size:6.5px;color:#2a2a2a;-webkit-text-stroke:0.2px;letter-spacing:-0.183px;">Theme</div>
<div class="b" style="left:953.20px;top:7.60px;width:0.80px;height:11.70px;background:#dfe3ee;"></div>
<div class="t" style="left:965.80px;top:11.00px;font-size:6px;color:#111;font-weight:700;letter-spacing:-0.204px;">Filters Overview</div>
<svg style="left:1013px;top:12.2px" width="5.2" height="3" viewBox="0 0 5.2 3"><path d="M0.3 0.3 L2.6 2.6 L4.9 0.3" fill="none" stroke="#555" stroke-width="0.6"/></svg>
<svg style="left:1031px;top:10.6px" width="8.4" height="5.2" viewBox="0 0 8.4 5.2"><g fill="none" stroke="#222" stroke-width="0.65"><circle cx="2" cy="3.4" r="1.5"/><circle cx="6.4" cy="3.4" r="1.5"/><path d="M3.5 3.2 Q4.2 2.6 4.9 3.2"/><path d="M0.6 2.9 Q0.9 0.5 2.6 0.5"/><path d="M7.8 2.9 Q7.5 0.5 5.8 0.5"/></g></svg>
<svg style="left:1053.8px;top:10.3px" width="6.2" height="6.4" viewBox="0 0 6.2 6.4"><g fill="none" stroke="#222" stroke-width="0.7"><path d="M4.0 2.3 L5.7 0.5 M3.7 0.5 H5.7 V2.5"/><path d="M2.2 4.1 L0.5 5.9 M2.5 5.9 H0.5 V3.9"/></g></svg>
<div class="b" style="left:1072.10px;top:7.60px;width:0.80px;height:11.70px;background:#dfe3ee;"></div>
<div class="b" style="left:1083.75px;top:12.9px;width:1.7px;height:1.7px;border-radius:50%;background:#222"></div>
<div class="b" style="left:1086.5500000000002px;top:12.9px;width:1.7px;height:1.7px;border-radius:50%;background:#222"></div>
<div class="b" style="left:1089.3500000000001px;top:12.9px;width:1.7px;height:1.7px;border-radius:50%;background:#222"></div>
</div>
</body></html>
